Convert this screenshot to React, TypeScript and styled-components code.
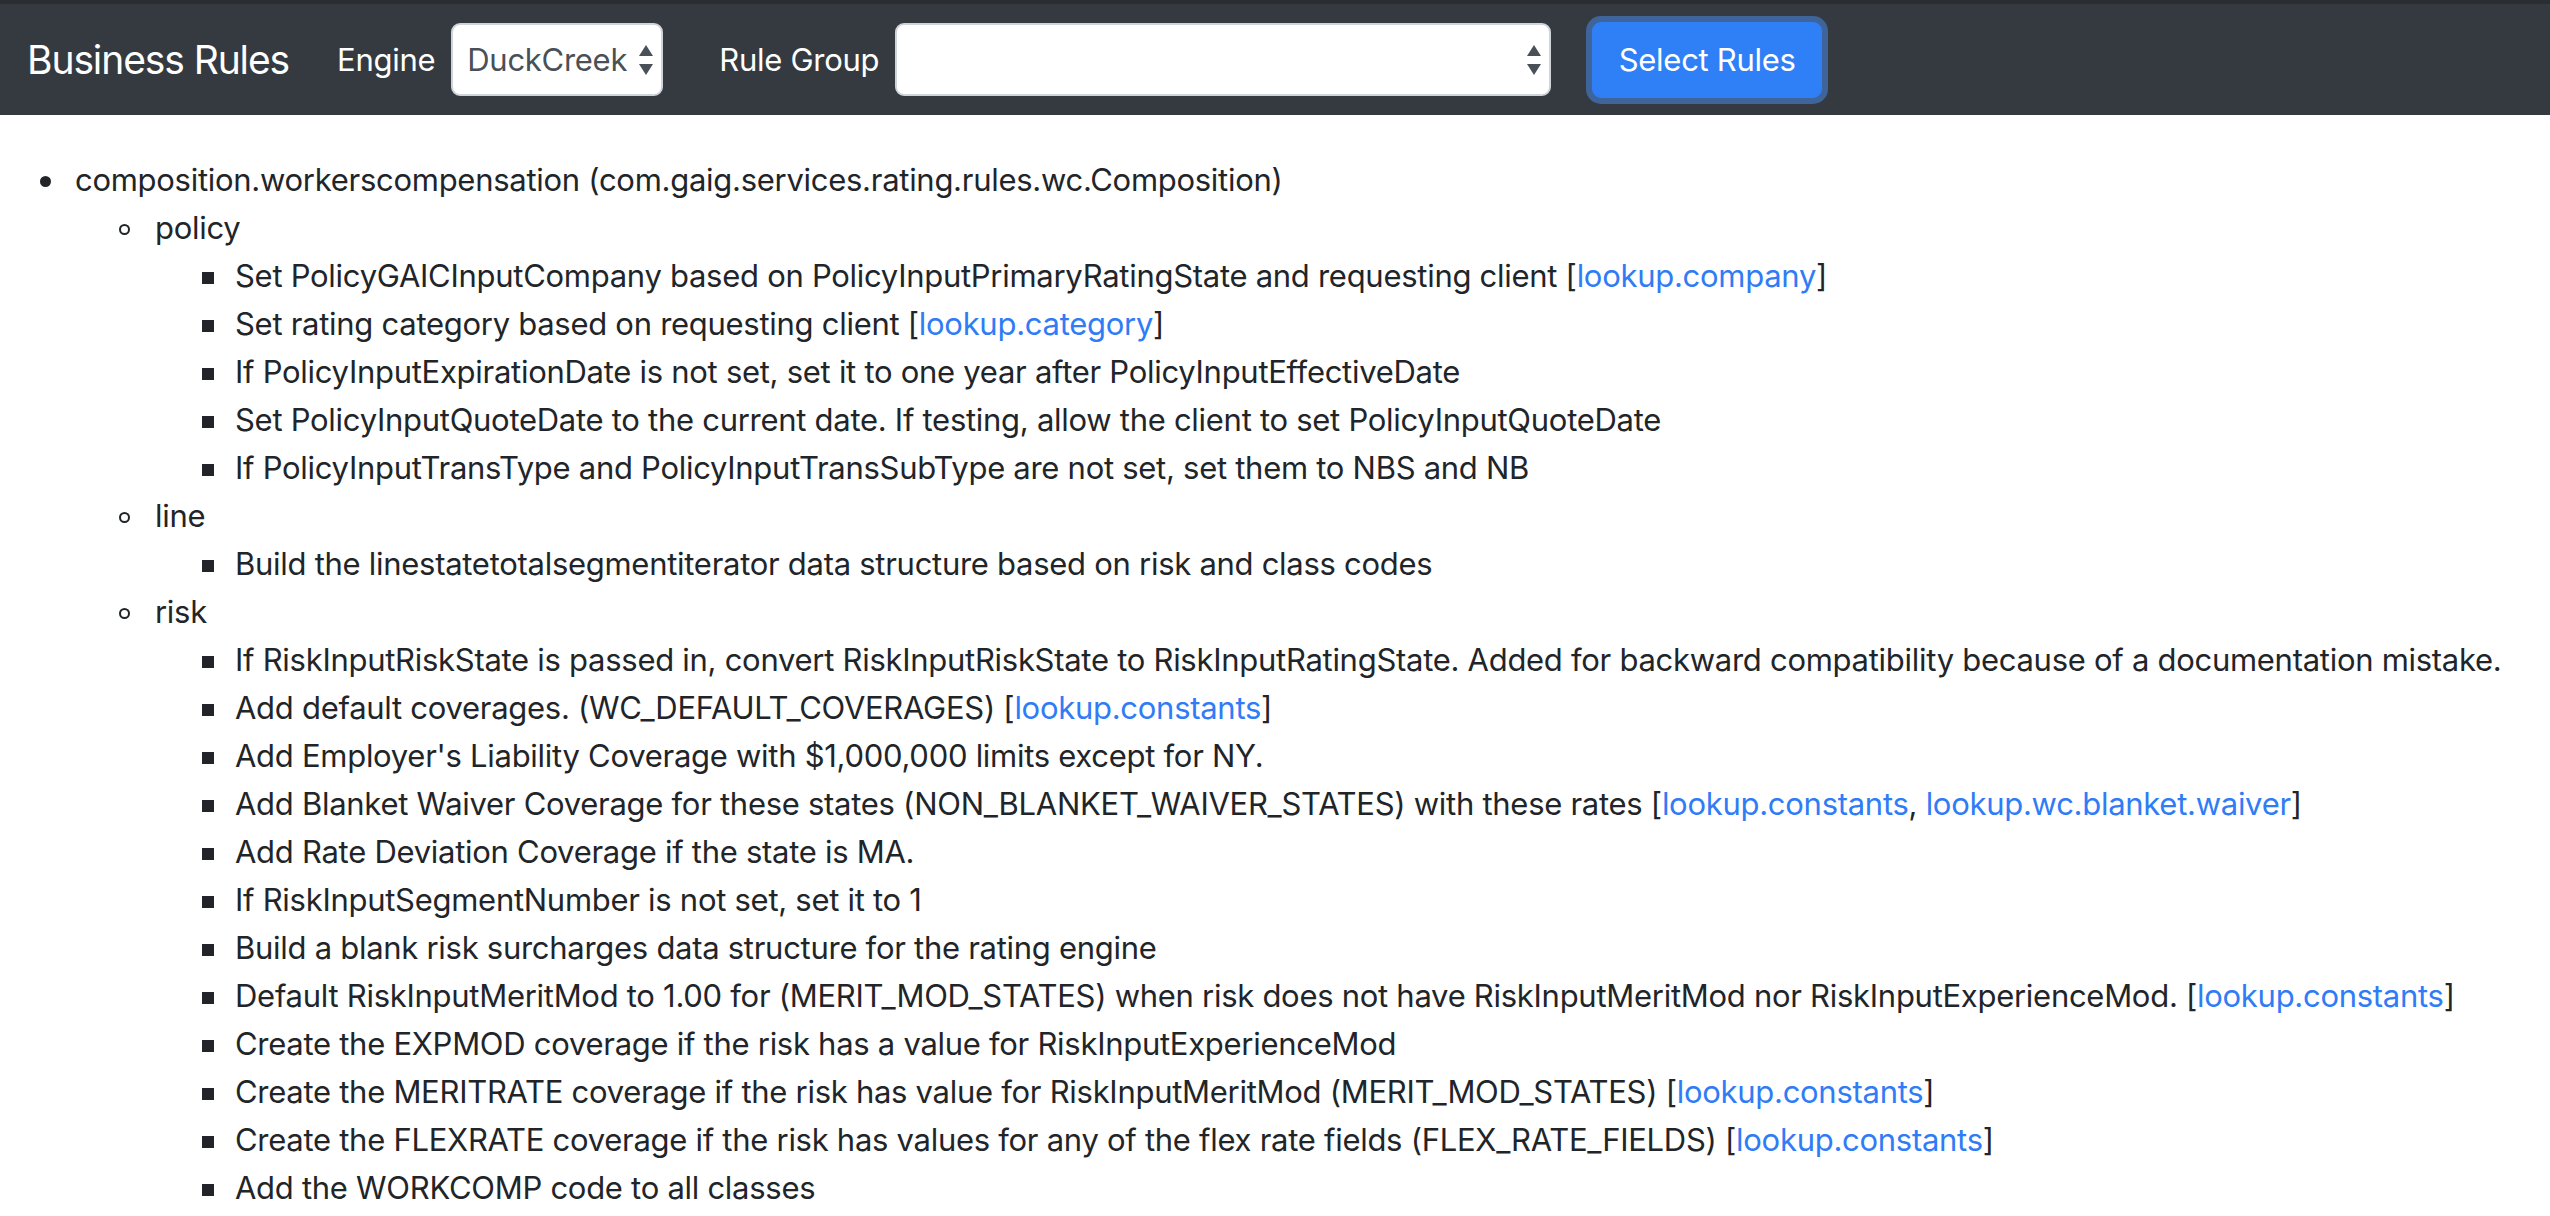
import React from "react";
import styled, { createGlobalStyle, css } from "styled-components";

const Global = createGlobalStyle`
  html, body { margin: 0; padding: 0; background: #ffffff; }
  body {
    font-family: Inter, "Noto Sans", "Liberation Sans", sans-serif;
    color: #212529;
    font-size: 31px;
    letter-spacing: -0.28px;
    line-height: 48px;
  }
`;

const Navbar = styled.nav`
  display: flex;
  align-items: center;
  height: 111px;
  border-top: 4px solid #2a2e33;
  background: #343a40;
  padding: 0 32px 0 27px;
`;

const Brand = styled.span`
  font-size: 39px;
  letter-spacing: -1.1px;
  color: #ffffff;
  margin-right: 48px;
  white-space: nowrap;
`;

const Label = styled.label<{ $gap?: number }>`
  color: #ffffff;
  font-size: 31px;
  margin-left: ${(p) => p.$gap ?? 0}px;
  margin-right: 16px;
  white-space: nowrap;
`;

const SelectWrap = styled.div<{ $w: number }>`
  position: relative;
  width: ${(p) => p.$w}px;
  height: 73px;
`;

const Select = styled.select`
  appearance: none;
  -webkit-appearance: none;
  box-sizing: border-box;
  width: 100%;
  height: 100%;
  margin: 0;
  padding: 0 22px 0 14px;
  border: 2px solid #ced4da;
  border-radius: 9px;
  background: #ffffff;
  color: #495057;
  font-family: inherit;
  font-size: 31px;
  letter-spacing: -0.28px;
  outline: none;
`;

const Arrows = styled.svg`
  position: absolute;
  right: 10px;
  top: 22px;
  width: 14px;
  height: 30px;
  pointer-events: none;
`;

const Button = styled.button`
  box-sizing: border-box;
  margin-left: 41px;
  width: 230px;
  height: 76px;
  border: 2px solid #2f7ff7;
  border-radius: 9px;
  background: #2f7ff7;
  color: #ffffff;
  font-family: inherit;
  font-size: 31px;
  letter-spacing: -0.28px;
  box-shadow: 0 0 0 6px #3e6499;
  cursor: pointer;
`;

const Main = styled.main`
  padding-top: 41px;
`;

const List = styled.ul<{ $level: number }>`
  margin: 0;
  padding-left: ${(p) => (p.$level === 1 ? 75 : 80)}px;
  list-style: none;
`;

type Marker = "disc" | "circle" | "square";

const markerStyles: Record<Marker, ReturnType<typeof css>> = {
  disc: css`
    width: 11px;
    height: 11px;
    margin-left: -35px;
    margin-right: 24px;
    border-radius: 50%;
    background: #212529;
  `,
  circle: css`
    width: 11px;
    height: 11px;
    margin-left: -36px;
    margin-right: 25px;
    border-radius: 50%;
    border: 2px solid #212529;
  `,
  square: css`
    width: 12px;
    height: 12px;
    margin-left: -33px;
    margin-right: 21px;
    background: #212529;
  `,
};

const Item = styled.li<{ $marker: Marker }>`
  white-space: nowrap;
  &::before {
    content: "";
    display: inline-block;
    box-sizing: border-box;
    vertical-align: middle;
    position: relative;
    top: -1px;
    ${(p) => markerStyles[p.$marker]}
  }
`;

const Link = styled.a`
  color: #2f7cf6;
  text-decoration: none;
`;

type Rule = { text: string; links?: string[] };

const policy: Rule[] = [
  { text: "Set PolicyGAICInputCompany based on PolicyInputPrimaryRatingState and requesting client", links: ["lookup.company"] },
  { text: "Set rating category based on requesting client", links: ["lookup.category"] },
  { text: "If PolicyInputExpirationDate is not set, set it to one year after PolicyInputEffectiveDate" },
  { text: "Set PolicyInputQuoteDate to the current date. If testing, allow the client to set PolicyInputQuoteDate" },
  { text: "If PolicyInputTransType and PolicyInputTransSubType are not set, set them to NBS and NB" },
];

const line: Rule[] = [
  { text: "Build the linestatetotalsegmentiterator data structure based on risk and class codes" },
];

const risk: Rule[] = [
  { text: "If RiskInputRiskState is passed in, convert RiskInputRiskState to RiskInputRatingState. Added for backward compatibility because of a documentation mistake." },
  { text: "Add default coverages. (WC_DEFAULT_COVERAGES)", links: ["lookup.constants"] },
  { text: "Add Employer's Liability Coverage with $1,000,000 limits except for NY." },
  { text: "Add Blanket Waiver Coverage for these states (NON_BLANKET_WAIVER_STATES) with these rates", links: ["lookup.constants", "lookup.wc.blanket.waiver"] },
  { text: "Add Rate Deviation Coverage if the state is MA." },
  { text: "If RiskInputSegmentNumber is not set, set it to 1" },
  { text: "Build a blank risk surcharges data structure for the rating engine" },
  { text: "Default RiskInputMeritMod to 1.00 for (MERIT_MOD_STATES) when risk does not have RiskInputMeritMod nor RiskInputExperienceMod.", links: ["lookup.constants"] },
  { text: "Create the EXPMOD coverage if the risk has a value for RiskInputExperienceMod" },
  { text: "Create the MERITRATE coverage if the risk has value for RiskInputMeritMod (MERIT_MOD_STATES)", links: ["lookup.constants"] },
  { text: "Create the FLEXRATE coverage if the risk has values for any of the flex rate fields (FLEX_RATE_FIELDS)", links: ["lookup.constants"] },
  { text: "Add the WORKCOMP code to all classes" },
];

const groups: { name: string; rules: Rule[] }[] = [
  { name: "policy", rules: policy },
  { name: "line", rules: line },
  { name: "risk", rules: risk },
];

function RuleItem({ rule }: { rule: Rule }) {
  return (
    <Item $marker="square">
      {rule.text}
      {rule.links && (
        <>
          {" ["}
          {rule.links.map((l, i) => (
            <React.Fragment key={l}>
              {i > 0 && ", "}
              <Link href="#">{l}</Link>
            </React.Fragment>
          ))}
          {"]"}
        </>
      )}
    </Item>
  );
}

function SelectArrows() {
  return (
    <Arrows viewBox="0 0 14 30">
      <path d="M7 0 L14 11 L0 11 Z" fill="#495057" />
      <path d="M0 19 L14 19 L7 30 Z" fill="#495057" />
    </Arrows>
  );
}

export default function App() {
  return (
    <>
      <Global />
      <Navbar>
        <Brand>Business Rules</Brand>
        <Label>Engine</Label>
        <SelectWrap $w={212}>
          <Select defaultValue="DuckCreek">
            <option>DuckCreek</option>
          </Select>
          <SelectArrows />
        </SelectWrap>
        <Label $gap={56}>Rule Group</Label>
        <SelectWrap $w={656}>
          <Select defaultValue="">
            <option value=""></option>
          </Select>
          <SelectArrows />
        </SelectWrap>
        <Button>Select Rules</Button>
      </Navbar>
      <Main>
        <List $level={1}>
          <Item $marker="disc">
            composition.workerscompensation (com.gaig.services.rating.rules.wc.Composition)
            <List $level={2}>
              {groups.map((g) => (
                <Item key={g.name} $marker="circle">
                  {g.name}
                  <List $level={3}>
                    {g.rules.map((r, i) => (
                      <RuleItem key={i} rule={r} />
                    ))}
                  </List>
                </Item>
              ))}
            </List>
          </Item>
        </List>
      </Main>
    </>
  );
}
